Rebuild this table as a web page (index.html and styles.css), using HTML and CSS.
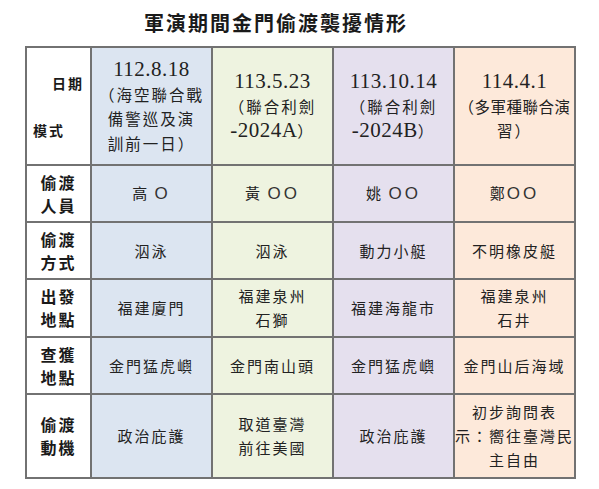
FILE: index.html
```html
<!DOCTYPE html>
<html lang="zh-Hant">
<head>
<meta charset="utf-8">
<link rel="stylesheet" href="styles.css">
</head>
<body>
<div class="page">
  <h1 class="title">軍演期間金門偷渡襲擾情形</h1>
  <table class="grid">
    <colgroup>
      <col class="c-label">
      <col class="c-data">
      <col class="c-data">
      <col class="c-data">
      <col class="c-data">
    </colgroup>
    <tr class="r-head">
      <th class="corner">
        <div class="corner-box">
          <span class="corner-top">日期</span>
          <span class="corner-bottom">模式</span>
        </div>
      </th>
      <td class="blue"><span class="num">112.8.18</span><br>（海空聯合戰<br>備警巡及演<br>訓前一日）</td>
      <td class="green"><span class="num">113.5.23</span><br>（聯合利劍<br><span class="num">-2024A</span>）</td>
      <td class="purple"><span class="num">113.10.14</span><br>（聯合利劍<br><span class="num">-2024B</span>）</td>
      <td class="orange"><span class="num">114.4.1</span><br><span class="snug">（多軍種聯合演</span><br>習）</td>
    </tr>
    <tr class="r-57">
      <th>偷渡<br>人員</th>
      <td class="blue">高 <span class="o">O</span></td>
      <td class="green">黃 <span class="o">OO</span></td>
      <td class="purple">姚 <span class="o">OO</span></td>
      <td class="orange">鄭<span class="o">OO</span></td>
    </tr>
    <tr class="r-57">
      <th>偷渡<br>方式</th>
      <td class="blue">泅泳</td>
      <td class="green">泅泳</td>
      <td class="purple">動力小艇</td>
      <td class="orange">不明橡皮艇</td>
    </tr>
    <tr class="r-58">
      <th>出發<br>地點</th>
      <td class="blue">福建廈門</td>
      <td class="green">福建泉州<br>石獅</td>
      <td class="purple">福建海龍市</td>
      <td class="orange">福建泉州<br>石井</td>
    </tr>
    <tr class="r-57">
      <th>查獲<br>地點</th>
      <td class="blue">金門猛虎嶼</td>
      <td class="green">金門南山頭</td>
      <td class="purple">金門猛虎嶼</td>
      <td class="orange">金門山后海域</td>
    </tr>
    <tr class="r-84">
      <th>偷渡<br>動機</th>
      <td class="blue">政治庇護</td>
      <td class="green">取道臺灣<br>前往美國</td>
      <td class="purple">政治庇護</td>
      <td class="orange tight">初步詢問表<br>示：嚮往臺灣民<br>主自由</td>
    </tr>
  </table>
</div>
</body>
</html>
```

FILE: styles.css
```css
html, body {
  margin: 0;
  padding: 0;
  background: #ffffff;
}

.page {
  width: 599px;
  height: 489px;
  font-family: "Noto Sans CJK TC", "Noto Sans CJK SC", sans-serif;
  color: #222222;
}

.title {
  margin: 0;
  height: 46px;
  padding-left: 144px;
  box-sizing: border-box;
  display: flex;
  align-items: center;
  font-size: 20px;
  font-weight: 700;
  letter-spacing: 2px;
  line-height: 1;
  color: #1a1a1a;
}

.grid {
  margin-left: 25px;
  width: 551px;
  border-collapse: collapse;
  table-layout: fixed;
  border: 2px solid #7a7a7a;
}

.c-label { width: 65px; }
.c-data { width: 121px; }

.grid th,
.grid td {
  border: 2px solid #727272;
  padding: 0;
  text-align: center;
  vertical-align: middle;
  font-size: 15px;
  line-height: 24px;
  letter-spacing: 2px;
}

.grid th {
  background: #ffffff;
  font-weight: 700;
  font-size: 16px;
  line-height: 23px;
  color: #1a1a1a;
}

.r-head { height: 116px; }
.r-57 { height: 57px; }
.r-58 { height: 58px; }
.r-84 { height: 84px; }

.r-head td { line-height: 24.5px; font-size: 15.5px; }

.num {
  font-family: "Liberation Serif", serif;
  font-size: 21px;
  letter-spacing: 0.5px;
}

.snug {
  white-space: nowrap;
  letter-spacing: 0.5px;
}

.o {
  font-family: "Liberation Sans", sans-serif;
  font-size: 17px;
  letter-spacing: 3px;
  color: #333;
}

.tight { line-height: 23px; letter-spacing: 1.5px; }

.blue { background: #dce5f1; }
.green { background: #eef3e0; }
.purple { background: #e5e0ee; }
.orange { background: #fde9da; }

.corner {
  background: linear-gradient(to top right, transparent calc(50% - 0.8px), #555555 50%, transparent calc(50% + 0.8px)) #ffffff;
}

.corner-box {
  height: 116px;
  display: flex;
  flex-direction: column;
  justify-content: space-between;
  padding: 24px 6px 22px 6px;
  box-sizing: border-box;
  font-size: 14px;
  letter-spacing: 2px;
}

.corner-top { align-self: flex-end; }
.corner-bottom { align-self: flex-start; }
```
